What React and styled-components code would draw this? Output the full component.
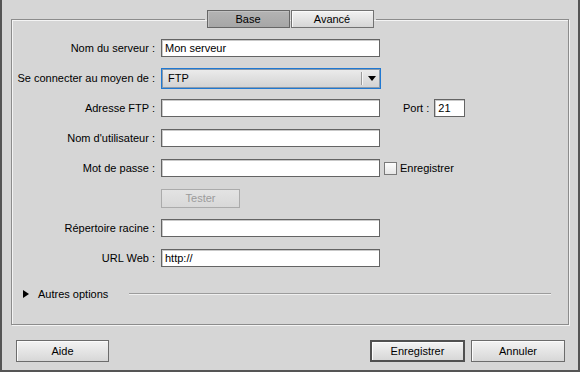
import React from 'react';
import styled, { createGlobalStyle } from 'styled-components';

const Global = createGlobalStyle`
  html, body { margin: 0; padding: 0; background: #d6d6d6; }
  body { font-family: "Liberation Sans", Arial, sans-serif; font-size: 11px; color: #000; }
  * { box-sizing: border-box; }
`;

const Window = styled.div`
  width: 580px;
  height: 372px;
  background: #d6d6d6;
  border: 2px solid #555;
  border-top: none;
  display: flex;
  flex-direction: column;
`;

const Group = styled.fieldset`
  margin: 10px 9px 0;
  padding: 5px 0 0;
  height: 315px;
  min-width: 0;
  border: 1px solid #8c8c8c;
  box-shadow: 1px 1px 0 #f4f4f4, inset 1px 1px 0 #f4f4f4;
`;

const Tabs = styled.legend`
  margin: 0 auto;
  padding: 0 2px;
  display: flex;
  gap: 1px;
`;

const Tab = styled.div`
  width: 83px;
  height: 18px;
  display: flex;
  align-items: center;
  justify-content: center;
  border: 1px solid ${p => (p.$active ? '#666' : '#727272')};
  background: ${p =>
    p.$active
      ? 'linear-gradient(#b4b4b4, #a6a6a6)'
      : 'linear-gradient(#f2f2f2, #d6d6d6)'};
  box-shadow: inset 1px 1px 0 ${p => (p.$active ? '#c2c2c2' : '#fbfbfb')};
`;

const Form = styled.div`
  display: grid;
  grid-template-columns: 149px 220px 1fr;
  grid-auto-rows: 30px;
  align-items: center;
`;

const Label = styled.label`
  text-align: right;
  padding-right: 6px;
  white-space: nowrap;
`;

const Field = styled.input`
  width: ${p => p.$w || 219}px;
  height: 18px;
  margin: 0;
  border: 1px solid #646464;
  box-shadow: inset 1px 1px 0 #c9c9c9;
  background: #fff;
  padding: 0 3px;
  font: inherit;
  color: #000;
  outline: none;
`;

const Combo = styled.div`
  width: 220px;
  height: 21px;
  display: flex;
  align-items: center;
  border: 1px solid #1f78d2;
  box-shadow: inset 0 0 0 1px #8a9aab;
  background: linear-gradient(#ececec, #d2d2d2);
  padding-left: 6px;
`;

const ComboText = styled.span`
  flex: 1;
`;

const ComboDivider = styled.span`
  width: 2px;
  height: 13px;
  border-left: 1px solid #9a9a9a;
  border-right: 1px solid #f6f6f6;
`;

const ComboArrow = styled.span`
  width: 17px;
  display: flex;
  justify-content: center;
  align-items: center;
`;

const Extra = styled.div`
  display: flex;
  align-items: center;
  padding-left: ${p => p.$pad || 0}px;
  gap: ${p => p.$gap || 0}px;
`;

const Check = styled.input`
  appearance: none;
  -webkit-appearance: none;
  margin: 0;
  width: 13px;
  height: 13px;
  border: 1px solid #7a7a7a;
  background: linear-gradient(#fdfdfd, #e6e6e6);
`;

const SmallButton = styled.button`
  width: 79px;
  height: 19px;
  margin: 0;
  padding: 0;
  font: inherit;
  color: #9b9b9b;
  border: 1px solid #ababab;
  background: linear-gradient(#e3e3e3, #d8d8d8);
`;

const More = styled.div`
  display: flex;
  align-items: center;
  height: 30px;
  margin-top: 6px;
  padding: 0 17px 0 11px;
`;

const Triangle = styled.span`
  width: 0;
  height: 0;
  border-top: 4px solid transparent;
  border-bottom: 4px solid transparent;
  border-left: 6px solid #000;
  margin-right: 9px;
`;

const Rule = styled.span`
  flex: 1;
  height: 2px;
  margin-left: 21px;
  border-top: 1px solid #9c9c9c;
  border-bottom: 1px solid #f0f0f0;
`;

const Footer = styled.div`
  display: flex;
  align-items: center;
  gap: 6px;
  margin-top: 15px;
  padding: 0 13px 0 14px;
`;

const Spacer = styled.div`
  flex: 1;
`;

const Button = styled.button`
  width: ${p => p.$w}px;
  height: 22px;
  margin: 0;
  padding: 0;
  font: inherit;
  color: #000;
  border: ${p => (p.$default ? '2px solid #505050' : '1px solid #6c6c6c')};
  background: linear-gradient(#f3f3f3, #d7d7d7);
  box-shadow: inset 1px 1px 0 #fcfcfc;
`;

export default function App() {
  return (
    <Window>
      <Global />
      <Group>
        <Tabs>
          <Tab $active>Base</Tab>
          <Tab>Avancé</Tab>
        </Tabs>
        <Form>
          <Label>Nom du serveur :</Label>
          <Field defaultValue="Mon serveur" />
          <Extra />

          <Label>Se connecter au moyen de :</Label>
          <Combo>
            <ComboText>FTP</ComboText>
            <ComboDivider />
            <ComboArrow>
              <svg width="8" height="5" viewBox="0 0 8 5">
                <path d="M0 0H8L4 5Z" fill="#000" />
              </svg>
            </ComboArrow>
          </Combo>
          <Extra />

          <Label>Adresse FTP :</Label>
          <Field />
          <Extra $pad={22} $gap={5}>
            Port :
            <Field $w={31} defaultValue="21" />
          </Extra>

          <Label>Nom d'utilisateur :</Label>
          <Field />
          <Extra />

          <Label>Mot de passe :</Label>
          <Field type="text" />
          <Extra $pad={3} $gap={3}>
            <Check type="checkbox" />
            Enregistrer
          </Extra>

          <span />
          <div>
            <SmallButton disabled>Tester</SmallButton>
          </div>
          <Extra />

          <Label>Répertoire racine :</Label>
          <Field />
          <Extra />

          <Label>URL Web :</Label>
          <Field defaultValue="http://" />
          <Extra />
        </Form>
        <More>
          <Triangle />
          Autres options
          <Rule />
        </More>
      </Group>
      <Footer>
        <Button $w={93}>Aide</Button>
        <Spacer />
        <Button $w={95} $default>Enregistrer</Button>
        <Button $w={94}>Annuler</Button>
      </Footer>
    </Window>
  );
}
